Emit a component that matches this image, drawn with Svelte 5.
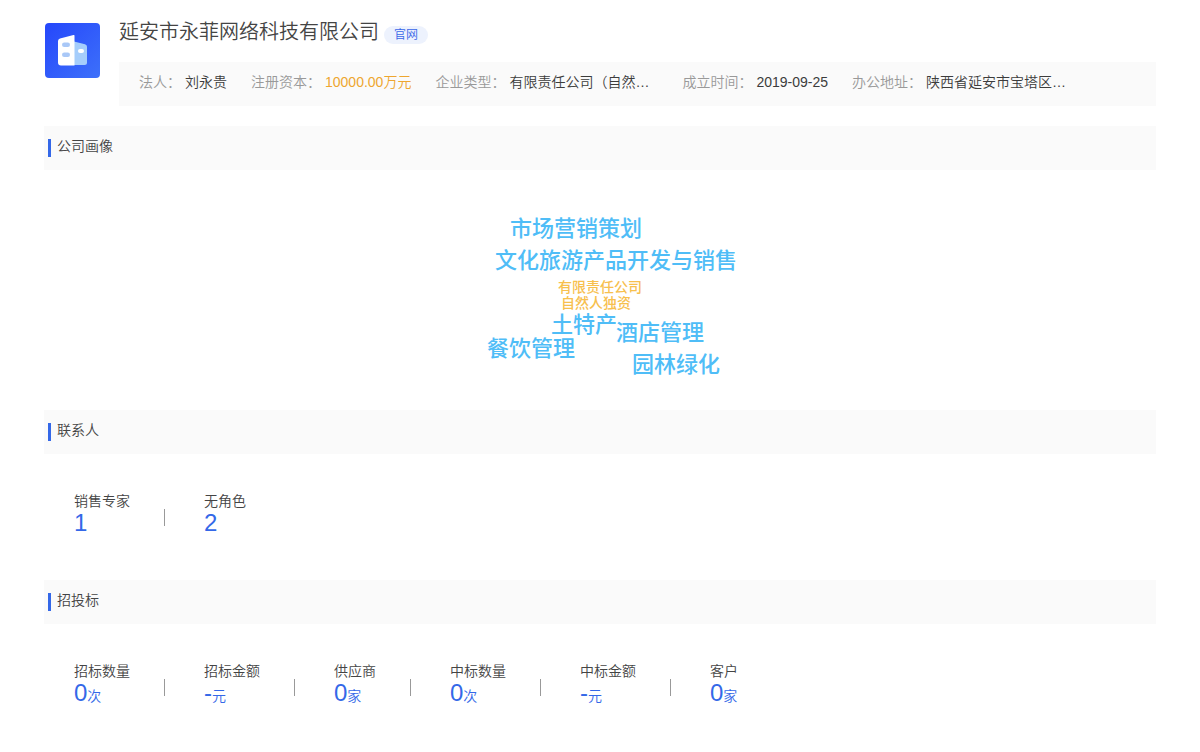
<script>
	const company = {
		name: '延安市永菲网络科技有限公司',
		info: [
			{ label: '法人', value: '刘永贵' },
			{ label: '注册资本', value: '10000.00万元', money: true },
			{ label: '企业类型', value: '有限责任公司（自然人独资）' },
			{ label: '成立时间', value: '2019-09-25' },
			{ label: '办公地址', value: '陕西省延安市宝塔区枣园街道' }
		]
	};

	// x / y are positions on the 280 x 240 cloud
	const words = [
		{ text: '市场营销策划', x: 50, y: 43 },
		{ text: '文化旅游产品开发与销售', x: 35, y: 75 },
		{ text: '有限责任公司', x: 98, y: 109, small: true },
		{ text: '自然人独资', x: 101, y: 125, small: true },
		{ text: '土特产', x: 91, y: 139 },
		{ text: '酒店管理', x: 156, y: 147 },
		{ text: '餐饮管理', x: 27, y: 163 },
		{ text: '园林绿化', x: 172, y: 179 }
	];

	const groups = [
		{
			title: '联系人',
			items: [
				{ label: '销售专家', value: '1' },
				{ label: '无角色', value: '2' }
			]
		},
		{
			title: '招投标',
			items: [
				{ label: '招标数量', value: '0', unit: '次' },
				{ label: '招标金额', value: '-', unit: '元' },
				{ label: '供应商', value: '0', unit: '家' },
				{ label: '中标数量', value: '0', unit: '次' },
				{ label: '中标金额', value: '-', unit: '元' },
				{ label: '客户', value: '0', unit: '家' }
			]
		}
	];
</script>

<main class="page">
	<header class="company">
		<svg class="logo" viewBox="0 0 55 55" aria-hidden="true">
			<defs>
				<linearGradient id="logo-bg" x1="0" y1="0" x2="1" y2="1">
					<stop offset="0" stop-color="#2547fb" />
					<stop offset="1" stop-color="#3d70fa" />
				</linearGradient>
			</defs>
			<rect width="55" height="55" rx="4" fill="url(#logo-bg)" />
			<path d="M29 18.5L40 21.2Q42 21.8 42 23.6V39.500Q42 42 39.500 42H29Z" fill="#a5cdfb" />
			<path d="M15 15.500Q13 16 13 18V39.500Q13 42.500 16 42.500H29.500V12.600Q29.500 11.700 28.500 12Z" fill="#fff" />
			<rect x="17" y="19.500" width="8" height="4.500" rx="2.200" fill="#a9c8f7" />
			<rect x="17" y="29.500" width="8" height="4.500" rx="2.200" fill="#a9c8f7" />
			<rect x="33" y="26" width="6" height="4" rx="2" fill="#fff" />
		</svg>
		<div class="detail">
			<div class="name-row">
				<h1>{company.name}</h1>
				<a class="site" href="#site">官网</a>
			</div>
			<dl class="info">
				{#each company.info as item}
					<div class="info-item">
						<dt>{item.label}：</dt>
						<dd class:money={item.money}>{item.value}</dd>
					</div>
				{/each}
			</dl>
		</div>
	</header>

	<section>
		<h2>公司画像</h2>
		<div class="cloud">
			{#each words as word}
				<span class="word" class:small={word.small} style="left: {word.x}px; top: {word.y}px">{word.text}</span>
			{/each}
		</div>
	</section>

	{#each groups as group}
		<section>
			<h2>{group.title}</h2>
			<ul class="stats">
				{#each group.items as item}
					<li>
						<div class="stat">
							<span class="label">{item.label}</span>
							<span class="value">{item.value}{#if item.unit}<small>{item.unit}</small>{/if}</span>
						</div>
					</li>
				{/each}
			</ul>
		</section>
	{/each}
</main>

<style>
	:global(body) {
		background: #fff;
	}

	.page {
		padding: 20px 44px 0;
		font-family: 'Liberation Sans', 'Noto Sans CJK SC', sans-serif;
		font-size: 14px;
		font-weight: 350;
		line-height: 20px;
		color: #444;
	}

	h1,
	h2,
	dl,
	dd,
	ul {
		margin: 0;
		padding: 0;
		font-weight: inherit;
	}

	.company {
		display: flex;
		gap: 19px;
		margin-bottom: 20px;
	}

	.logo {
		flex: none;
		width: 55px;
		height: 55px;
		margin: 3px 0 0 1px;
	}

	.detail {
		flex: 1;
		min-width: 0;
	}

	.name-row {
		display: flex;
		align-items: flex-end;
		gap: 5px;
		height: 24px;
		margin-bottom: 18px;
	}

	h1 {
		font-size: 20px;
		line-height: 24px;
	}

	.site {
		padding: 0 10px;
		border-radius: 9px;
		background: #edf2fd;
		color: #3a66e8;
		font-size: 12px;
		line-height: 18px;
		text-decoration: none;
	}

	.info {
		display: flex;
		flex-wrap: wrap;
		gap: 0 24px;
		padding: 10px 20px 14px;
		background: #fafafa;
	}

	.info-item {
		display: flex;
		gap: 4px;
	}

	dt {
		color: #999;
	}

	dd {
		max-width: 149px;
		overflow: hidden;
		text-overflow: ellipsis;
		white-space: nowrap;
		color: #3c3c3c;
	}

	.money {
		color: #eea62f;
	}

	h2 {
		display: flex;
		gap: 6px;
		padding: 10px 4px 13px;
		background: #fafafa;
		font-size: 14px;
	}

	h2::before {
		content: '';
		width: 3px;
		height: 18px;
		margin-top: 3px;
		background: #3468e8;
	}

	.cloud {
		position: relative;
		width: 280px;
		height: 240px;
		margin: 0 auto;
	}

	.word {
		position: absolute;
		color: #4fbdf7;
		font-size: 22px;
		font-weight: 500;
		line-height: 32px;
		white-space: nowrap;
	}

	.word.small {
		color: #f7c04e;
		font-size: 14px;
		line-height: 16px;
	}

	.stats {
		display: flex;
		flex-wrap: wrap;
		padding: 37px 30px 45px;
		list-style: none;
	}

	li {
		display: flex;
	}

	li:not(:last-child)::after {
		content: '';
		width: 1px;
		height: 17px;
		margin: 18px 39px 0 34px;
		background: #999;
	}

	.stat {
		display: flex;
		flex-direction: column;
	}

	.value {
		color: #3468e8;
		font-size: 24px;
		line-height: 24px;
	}

	small {
		font-size: 14px;
	}
</style>
